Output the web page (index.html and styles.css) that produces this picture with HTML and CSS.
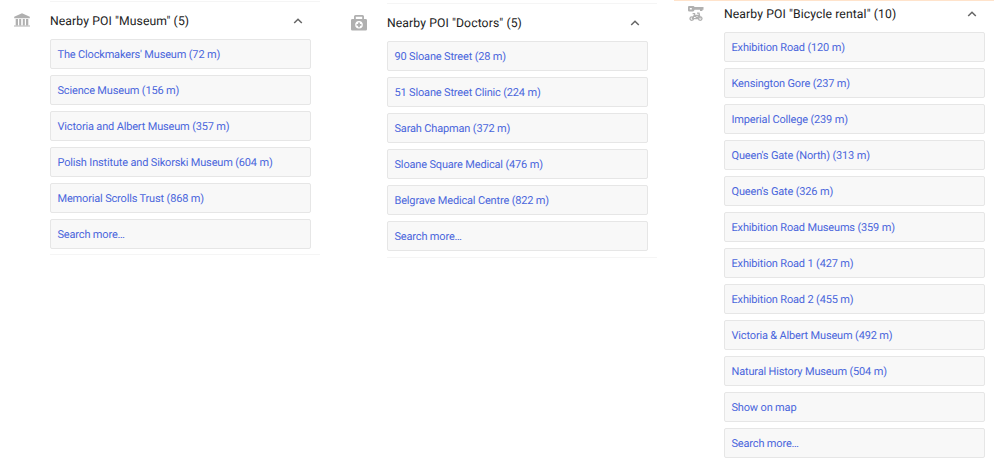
FILE: index.html
```html
<!DOCTYPE html>
<html lang="en">
<head>
<meta charset="utf-8">
<title>Nearby POI</title>
<link rel="stylesheet" href="styles.css">
</head>
<body>
<main class="columns">
  <section class="panel panel-museum">
    <svg class="icon" viewBox="0 0 18 18"><path d="M9 1.2 16.8 4.8V6.2H1.2V4.8ZM2.7 7H5V13.3H2.7ZM6.2 7H8.2V13.3H6.2ZM9.8 7H11.8V13.3H9.8ZM13 7H15.3V13.3H13ZM1 13.5H17V14.6H1Z"/></svg>
    <div class="content">
      <header class="head"><h2>Nearby POI "Museum" (5)</h2><svg class="chevron" viewBox="0 0 10 8"><path d="M1.2 6 5 2.2 8.8 6"/></svg></header>
      <ul class="list">
        <li>The Clockmakers' Museum (72 m)</li>
        <li>Science Museum (156 m)</li>
        <li>Victoria and Albert Museum (357 m)</li>
        <li>Polish Institute and Sikorski Museum (604 m)</li>
        <li>Memorial Scrolls Trust (868 m)</li>
        <li>Search more…</li>
      </ul>
    </div>
  </section>
  <section class="panel panel-doctors">
    <svg class="icon" viewBox="0 0 18 18"><path fill-rule="evenodd" d="M4 5V2.5Q4 1 5.5 1H12.5Q14 1 14 2.5V5H15.7Q17 5 17 6.3V15.2Q17 16.5 15.7 16.5H2.3Q1 16.5 1 15.2V6.3Q1 5 2.3 5ZM5.8 5H12.2V2.7H5.8ZM9 7A3.8 3.8 0 1 0 9 14.6 3.8 3.8 0 1 0 9 7Z"/><path d="M8.1 8.4H9.9V9.9H11.4V11.7H9.9V13.2H8.1V11.7H6.6V9.9H8.1Z"/></svg>
    <div class="content">
      <header class="head"><h2>Nearby POI "Doctors" (5)</h2><svg class="chevron" viewBox="0 0 10 8"><path d="M1.2 6 5 2.2 8.8 6"/></svg></header>
      <ul class="list">
        <li>90 Sloane Street (28 m)</li>
        <li>51 Sloane Street Clinic (224 m)</li>
        <li>Sarah Chapman (372 m)</li>
        <li>Sloane Square Medical (476 m)</li>
        <li>Belgrave Medical Centre (822 m)</li>
        <li>Search more…</li>
      </ul>
    </div>
  </section>
  <section class="panel panel-bicycle">
    <svg class="icon" viewBox="0 0 18 18"><path fill-rule="evenodd" d="M2 1H6.2Q7.3 1 7.5 2H16.5V4.7H15.4V6H13V4.7H7.5Q7.2 6.5 6 6.5H2.2Q1 6.5 1 5.3V2.2Q1 1 2 1ZM2.8 3V4.6H4.8V3Z"/><g class="bike"><circle cx="4.8" cy="13.6" r="1.8"/><circle cx="13.2" cy="13.6" r="1.8"/><path d="M5 13.6 7.6 9.8 10.2 13.6H5M7.6 10.4H11.8L10.2 13.6M10 8.2H12L13.2 13.6M5.6 8.6H8.2"/></g></svg>
    <div class="content">
      <header class="head"><h2>Nearby POI "Bicycle rental" (10)</h2><svg class="chevron" viewBox="0 0 10 8"><path d="M1.2 6 5 2.2 8.8 6"/></svg></header>
      <ul class="list">
        <li>Exhibition Road (120 m)</li>
        <li>Kensington Gore (237 m)</li>
        <li>Imperial College (239 m)</li>
        <li>Queen's Gate (North) (313 m)</li>
        <li>Queen's Gate (326 m)</li>
        <li>Exhibition Road Museums (359 m)</li>
        <li>Exhibition Road 1 (427 m)</li>
        <li>Exhibition Road 2 (455 m)</li>
        <li>Victoria &amp; Albert Museum (492 m)</li>
        <li>Natural History Museum (504 m)</li>
        <li>Show on map</li>
        <li>Search more…</li>
      </ul>
    </div>
  </section>
</main>
</body>
</html>
```
FILE: styles.css
```css
* { box-sizing: border-box; }
body {
  margin: 0;
  background: #fff;
  font-family: Roboto, sans-serif;
  text-rendering: geometricPrecision;
  overflow: hidden;
}
.columns {
  display: grid;
  grid-template-columns: 337px 337px 320px;
  align-items: start;
  height: 463px;
}
.panel {
  display: flex;
  gap: 19px;
  padding-left: 13px;
}
.icon {
  flex: none;
  width: 18px;
  height: 18px;
  margin-top: 11px;
  fill: #b0b0b0;
}
.bike { fill: none; stroke: #b0b0b0; stroke-width: 1.3; }
.content {
  width: 270px;
  border-top: 1px solid #f5f5f5;
  border-bottom: 1px solid #f5f5f5;
  padding-bottom: 5px;
}
.head {
  display: flex;
  align-items: center;
  justify-content: space-between;
  width: 261px;
  height: 37px;
  padding-right: 8px;
}
h2 {
  margin: 0;
  font-size: 12.2px;
  font-weight: 400;
  line-height: 16px;
  letter-spacing: 0.1px;
  color: #222;
  white-space: nowrap;
}
.chevron {
  width: 10px;
  height: 8px;
  fill: none;
  stroke: #666;
  stroke-width: 1.5;
}
.list {
  display: grid;
  gap: 6px;
  width: 261px;
  margin: 0;
  padding: 0;
  list-style: none;
}
.list li {
  height: 30px;
  padding-left: 6.5px;
  border: 1px solid #e6e6e6;
  border-radius: 2px;
  background: #f8f8f8;
  color: #4a66dc;
  font-size: 11px;
  line-height: 29px;
  letter-spacing: -0.165px;
  white-space: nowrap;
}
.panel-museum { padding-top: 1px; }
.panel-doctors { padding-top: 3px; }
.panel-doctors .content { padding-bottom: 6px; }
.panel-doctors .list li { line-height: 30px; }
.panel-bicycle { border-top: 1px solid #ffe3cb; }
.panel-bicycle .icon { margin-top: 4px; }
.panel-bicycle .content { border: 0; padding-bottom: 0; }
.panel-bicycle .head { height: 31px; padding-bottom: 5px; }
.panel-bicycle .list li { line-height: 30px; }
```
